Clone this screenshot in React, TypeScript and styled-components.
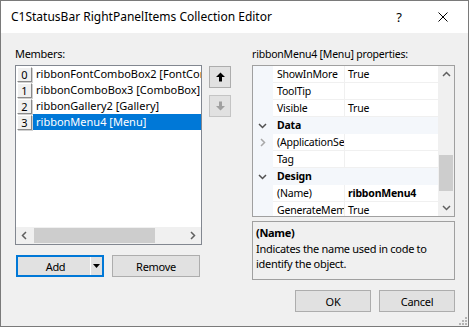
import React from 'react'
import styled, { createGlobalStyle, css } from 'styled-components'

const GlobalStyle = createGlobalStyle`
  html, body {
    margin: 0;
    padding: 0;
    background: #ffffff;
  }
  body {
    font-family: "Noto Sans", "Liberation Sans", sans-serif;
    font-size: 11px;
    letter-spacing: -0.3px;
    color: #000000;
  }
  * {
    box-sizing: border-box;
  }
`

type Member = { index: number; text: string }
type GridRow =
  | { kind: 'prop'; name: string; value?: string; bold?: boolean; expander?: boolean }
  | { kind: 'category'; name: string }

const members: Member[] = [
  { index: 0, text: 'ribbonFontComboBox2 [FontComboBox]' },
  { index: 1, text: 'ribbonComboBox3 [ComboBox]' },
  { index: 2, text: 'ribbonGallery2 [Gallery]' },
  { index: 3, text: 'ribbonMenu4 [Menu]' },
]

const gridRows: GridRow[] = [
  { kind: 'prop', name: 'ShowInMore', value: 'True' },
  { kind: 'prop', name: 'ToolTip', value: '' },
  { kind: 'prop', name: 'Visible', value: 'True' },
  { kind: 'category', name: 'Data' },
  { kind: 'prop', name: '(ApplicationSettings)', value: '', expander: true },
  { kind: 'prop', name: 'Tag', value: '' },
  { kind: 'category', name: 'Design' },
  { kind: 'prop', name: '(Name)', value: 'ribbonMenu4', bold: true },
  { kind: 'prop', name: 'GenerateMember', value: 'True' },
]

const Chevron: React.FC<{ dir: 'up' | 'down' | 'left' | 'right'; color?: string }> = ({ dir, color = '#606060' }) => {
  const points = {
    up: '1,6 4.5,2.5 8,6',
    down: '1,3 4.5,6.5 8,3',
    left: '6,1 2.5,4.5 6,8',
    right: '3,1 6.5,4.5 3,8',
  }[dir]
  return (
    <svg width="9" height="9" viewBox="0 0 9 9">
      <polyline points={points} fill="none" stroke={color} strokeWidth="1.5" />
    </svg>
  )
}

const MoveArrow: React.FC<{ up?: boolean; disabled?: boolean }> = ({ up, disabled }) => (
  <svg width="9" height="10" viewBox="0 0 9 10" style={{ transform: up ? undefined : 'rotate(180deg)' }}>
    <polygon points="4.5,0.5 9,5 6,5 6,9.5 3,9.5 3,5 0,5" fill={disabled ? '#a0a0a0' : '#000000'} />
  </svg>
)

const App: React.FC = () => {
  return (
    <>
      <GlobalStyle />
      <Window>
        <TitleBar>
          <TitleText>C1StatusBar RightPanelItems Collection Editor</TitleText>
          <HelpGlyph>?</HelpGlyph>
          <CloseGlyph>
            <svg width="10" height="10" viewBox="0 0 10 10">
              <line x1="0.5" y1="0.5" x2="9.5" y2="9.5" stroke="#000" strokeWidth="1" />
              <line x1="9.5" y1="0.5" x2="0.5" y2="9.5" stroke="#000" strokeWidth="1" />
            </svg>
          </CloseGlyph>
        </TitleBar>

        <Body>
          <LeftPane>
            <FieldLabel>Members:</FieldLabel>
            <ListRow>
              <ListBox>
                <ListItems>
                  {members.map(m => (
                    <ListItem key={m.index}>
                      <IndexCell>{m.index}</IndexCell>
                      <ItemText selected={m.index === 3}>{m.text}</ItemText>
                    </ListItem>
                  ))}
                </ListItems>
                <HScroll>
                  <ScrollArrow>
                    <Chevron dir="left" />
                  </ScrollArrow>
                  <HTrack>
                    <HThumb />
                  </HTrack>
                  <ScrollArrow>
                    <Chevron dir="right" />
                  </ScrollArrow>
                </HScroll>
              </ListBox>
              <MoveButtons>
                <MoveButton>
                  <MoveArrow up />
                </MoveButton>
                <MoveButton disabled>
                  <MoveArrow disabled />
                </MoveButton>
              </MoveButtons>
            </ListRow>
            <ActionRow>
              <SplitButton>
                <SplitMain>Add</SplitMain>
                <SplitDivider />
                <SplitDrop>
                  <svg width="7" height="4" viewBox="0 0 7 4">
                    <polygon points="0,0 7,0 3.5,4" fill="#000" />
                  </svg>
                </SplitDrop>
              </SplitButton>
              <PushButton width={88}>Remove</PushButton>
            </ActionRow>
          </LeftPane>

          <RightPane>
            <FieldLabel compact>ribbonMenu4 [Menu] properties:</FieldLabel>
            <PropertyGrid>
              <GridRows>
                {gridRows.map((r, i) =>
                  r.kind === 'category' ? (
                    <CategoryRow key={i}>
                      <Gutter>
                        <Chevron dir="down" color="#505050" />
                      </Gutter>
                      <CategoryName>{r.name}</CategoryName>
                    </CategoryRow>
                  ) : (
                    <PropRow key={i}>
                      <Gutter>{r.expander && <Chevron dir="right" color="#a8a8a8" />}</Gutter>
                      <PropName>{r.name}</PropName>
                      <PropValue bold={r.bold}>{r.value}</PropValue>
                    </PropRow>
                  )
                )}
              </GridRows>
              <VScroll>
                <VArrow>
                  <Chevron dir="up" />
                </VArrow>
                <VTrack>
                  <VThumb />
                </VTrack>
                <VArrow>
                  <Chevron dir="down" />
                </VArrow>
              </VScroll>
            </PropertyGrid>
            <Description>
              <DescTitle>(Name)</DescTitle>
              <DescText>Indicates the name used in code to identify the object.</DescText>
            </Description>
            <DialogButtons>
              <PushButton width={76}>OK</PushButton>
              <PushButton width={76}>Cancel</PushButton>
            </DialogButtons>
          </RightPane>
        </Body>
        <Grip>
          <svg width="10" height="10" viewBox="0 0 10 10">
            {[
              [8, 2], [8, 5], [5, 5], [8, 8], [5, 8], [2, 8],
            ].map(([x, y], i) => (
              <rect key={i} x={x} y={y} width="2" height="2" fill="#b4b4b4" />
            ))}
          </svg>
        </Grip>
      </Window>
    </>
  )
}

const Window = styled.div`
  position: relative;
  width: 469px;
  height: 327px;
  border: 1px solid #7a7a7a;
  background: #f0f0f0;
  display: flex;
  flex-direction: column;
  overflow: hidden;
`

const TitleBar = styled.div`
  height: 32px;
  flex-shrink: 0;
  background: #ffffff;
  display: flex;
  align-items: center;
  padding-left: 10px;
`

const TitleText = styled.span`
  font-size: 12px;
  letter-spacing: 0;
  flex: 1;
  white-space: nowrap;
  padding-bottom: 1px;
`

const HelpGlyph = styled.span`
  font-size: 13px;
  width: 12px;
  margin-right: 33px;
  text-align: center;
`

const CloseGlyph = styled.span`
  display: flex;
  margin-right: 20px;
`

const Body = styled.div`
  flex: 1;
  display: flex;
  padding: 11px 13px 0 14px;
  gap: 21px;
`

const LeftPane = styled.div`
  width: 216px;
  display: flex;
  flex-direction: column;
`

const RightPane = styled.div`
  width: 203px;
  display: flex;
  flex-direction: column;
`

const FieldLabel = styled.div<{ compact?: boolean }>`
  height: 16px;
  line-height: 16px;
  padding-top: 2px;
  margin-bottom: 5px;
  white-space: nowrap;
  ${p =>
    p.compact &&
    css`
      font-size: 10.5px;
      letter-spacing: -0.2px;
    `}
`

const ListRow = styled.div`
  display: flex;
  gap: 7px;
`

const ListBox = styled.div`
  width: 187px;
  height: 180px;
  border: 1px solid #828790;
  background: #ffffff;
  display: flex;
  flex-direction: column;
`

const ListItems = styled.div`
  flex: 1;
  overflow: hidden;
`

const ListItem = styled.div`
  height: 16px;
  display: flex;
  padding-left: 1px;
`

const IndexCell = styled.div`
  width: 15px;
  height: 15px;
  margin-top: 1px;
  background: #f0f0f0;
  border-top: 1px solid #ffffff;
  border-left: 1px solid #ffffff;
  border-right: 1px solid #8a8a8a;
  border-bottom: 1px solid #8a8a8a;
  box-shadow: 1px 1px 0 #d0d0d0;
  display: flex;
  align-items: center;
  justify-content: center;
  font-size: 11px;
  letter-spacing: 0;
  line-height: 1;
`

const ItemText = styled.div<{ selected?: boolean }>`
  flex: 1;
  margin-left: 1px;
  padding-left: 3px;
  white-space: nowrap;
  overflow: hidden;
  line-height: 16px;
  letter-spacing: 0;
  ${p =>
    p.selected &&
    css`
      background: #0078d7;
      color: #ffffff;
    `}
`

const HScroll = styled.div`
  height: 17px;
  display: flex;
  background: #f0f0f0;
`

const ScrollArrow = styled.div`
  width: 17px;
  display: flex;
  align-items: center;
  justify-content: center;
`

const HTrack = styled.div`
  flex: 1;
  padding: 1px 0;
`

const HThumb = styled.div`
  width: 121px;
  height: 100%;
  margin-left: 1px;
  background: #cdcdcd;
`

const MoveButtons = styled.div`
  display: flex;
  flex-direction: column;
  gap: 7px;
  padding-top: 1px;
`

const MoveButton = styled.div<{ disabled?: boolean }>`
  width: 22px;
  height: 22px;
  display: flex;
  align-items: center;
  justify-content: center;
  background: #e1e1e1;
  border: 1px solid ${p => (p.disabled ? '#c4c4c4' : '#adadad')};
`

const ActionRow = styled.div`
  display: flex;
  gap: 8px;
  margin-top: 10px;
  padding-left: 1px;
`

const SplitButton = styled.div`
  width: 88px;
  height: 22px;
  border: 2px solid #0078d7;
  background: #e1e1e1;
  display: flex;
`

const SplitMain = styled.div`
  flex: 1;
  display: flex;
  align-items: center;
  justify-content: center;
  padding-left: 3px;
`

const SplitDivider = styled.div`
  width: 1px;
  background: #ffffff;
`

const SplitDrop = styled.div`
  width: 11px;
  display: flex;
  align-items: center;
  justify-content: center;
`

const PushButton = styled.div<{ width: number }>`
  width: ${p => p.width}px;
  height: 22px;
  border: 1px solid #adadad;
  background: #e1e1e1;
  display: flex;
  align-items: center;
  justify-content: center;
`

const PropertyGrid = styled.div`
  height: 152px;
  border: 1px solid #a0a0a0;
  background: #ffffff;
  display: flex;
  overflow: hidden;
  font-size: 10.5px;
  letter-spacing: -0.2px;
`

const GridRows = styled.div`
  flex: 1;
  display: flex;
  flex-direction: column;
  overflow: hidden;
`

const rowBase = css`
  height: 17px;
  flex-shrink: 0;
  display: flex;
  line-height: 17px;
  white-space: nowrap;
`

const PropRow = styled.div`
  ${rowBase}
`

const CategoryRow = styled.div`
  ${rowBase}
  background: #f4f7fb;
`

const Gutter = styled.div`
  width: 20px;
  flex-shrink: 0;
  background: #f4f7fb;
  display: flex;
  align-items: center;
  justify-content: center;
  padding-right: 2px;
`

const PropName = styled.div`
  width: 72px;
  flex-shrink: 0;
  padding-left: 4px;
  overflow: hidden;
  border-bottom: 1px solid #f0f0f0;
  border-right: 1px solid #f0f0f0;
`

const PropValue = styled.div<{ bold?: boolean }>`
  flex: 1;
  padding-left: 3px;
  overflow: hidden;
  border-bottom: 1px solid #f0f0f0;
  font-weight: ${p => (p.bold ? 700 : 400)};
`

const CategoryName = styled.div`
  flex: 1;
  padding-left: 4px;
  font-weight: 700;
`

const VScroll = styled.div`
  width: 16px;
  flex-shrink: 0;
  background: #f0f0f0;
  display: flex;
  flex-direction: column;
`

const VArrow = styled.div`
  height: 17px;
  display: flex;
  align-items: center;
  justify-content: center;
`

const VTrack = styled.div`
  flex: 1;
  padding: 0 1px;
`

const VThumb = styled.div`
  height: 36px;
  margin-top: 72px;
  background: #cdcdcd;
`

const Description = styled.div`
  height: 59px;
  margin-top: 4px;
  border: 1px solid #a0a0a0;
  padding: 3px 3px;
  line-height: 15px;
`

const DescTitle = styled.div`
  font-weight: 700;
`

const DescText = styled.div`
  margin-top: 1px;
`

const DialogButtons = styled.div`
  display: flex;
  justify-content: flex-end;
  gap: 8px;
  margin-top: 10px;
`

const Grip = styled.div`
  position: absolute;
  right: 1px;
  bottom: 1px;
  display: flex;
`

export default App
